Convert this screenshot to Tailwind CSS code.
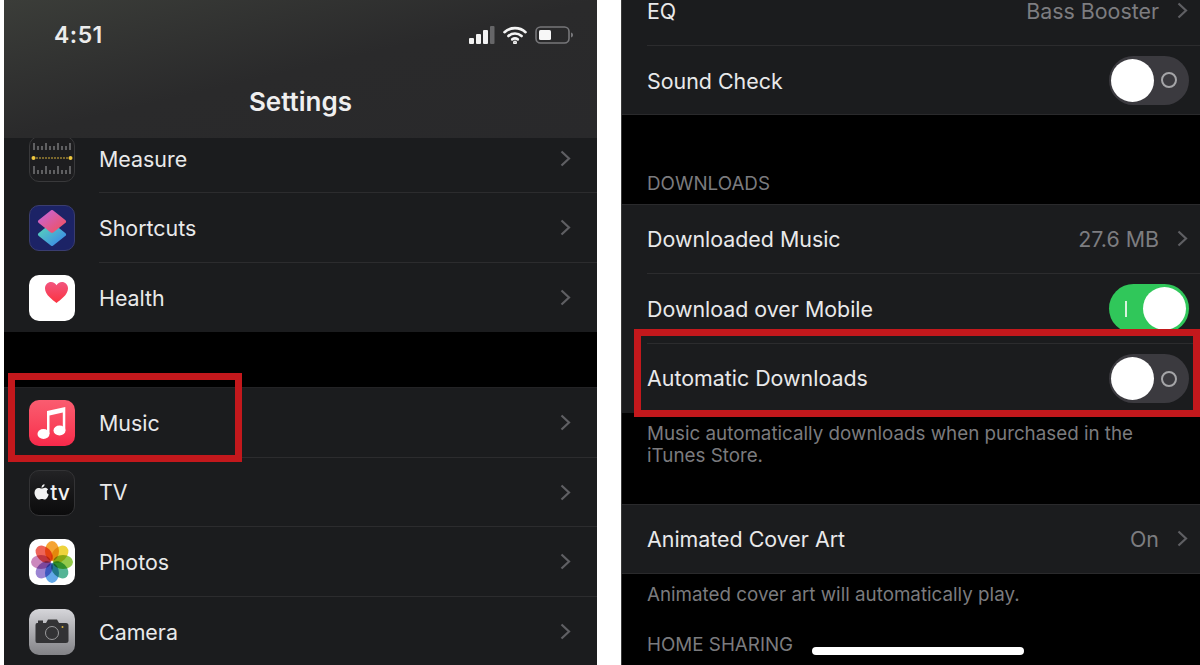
<!DOCTYPE html>
<html lang="en">
  <head>
    <meta charset="UTF-8" />
    <meta name="viewport" content="width=device-width, initial-scale=1.0" />
    <title>Settings - Music</title>
    <script src="https://cdn.jsdelivr.net/npm/@tailwindcss/browser@4"></script>
  </head>
  <body class="bg-white font-['Inter','Liberation_Sans',sans-serif] text-[#e9e9ea] overflow-hidden">
    <div class="relative w-[1200px] h-[665px] overflow-hidden flex bg-white">
      <!-- Left phone -->
      <section class="ml-[4px] w-[593px] h-[665px] overflow-hidden bg-black flex flex-col shrink-0">
        <!-- Status bar + title -->
        <header class="relative z-10 h-[138px] shrink-0 bg-gradient-to-br from-[#3b3d39] via-[#2a2a2b] to-[#29292b] flex flex-col">
          <div class="flex items-center justify-between h-[70px] pl-[50px] pr-[23px]">
            <span class="text-[23px] font-semibold text-[#ececec] tracking-[0.5px]">4:51</span>
            <div class="flex items-center gap-[8px]">
              <svg width="26" height="18" viewBox="0 0 26 18">
                <rect x="0" y="12" width="5" height="6" rx="1" fill="#f2f2f2" />
                <rect x="7" y="8" width="5" height="10" rx="1" fill="#f2f2f2" />
                <rect x="14" y="4" width="5" height="14" rx="1" fill="#f2f2f2" />
                <rect x="21" y="0" width="4.5" height="18" rx="1" fill="#666668" />
              </svg>
              <svg width="24" height="18" viewBox="0 0 24 18" fill="none" stroke="#f4f4f4" stroke-width="2.6" stroke-linecap="round">
                <path d="M1.5 6.2C7.2 0.8 16.8 0.8 22.5 6.2" />
                <path d="M5.4 10C9.2 6.6 14.8 6.6 18.6 10" />
                <path d="M9.2 13.4C10.9 12.2 13.1 12.2 14.8 13.4" />
                <circle cx="12" cy="16.4" r="0.7" fill="#f4f4f4" />
              </svg>
              <svg width="39" height="19" viewBox="0 0 39 19">
                <rect x="1" y="1" width="33" height="16" rx="4.5" fill="none" stroke="#77777a" stroke-width="1.6" />
                <rect x="4" y="4" width="12" height="10" rx="1.5" fill="#f7f7f7" />
                <path d="M36 6.5C37.6 7 38 8 38 9C38 10 37.6 11 36 11.5Z" fill="#77777a" />
              </svg>
            </div>
          </div>
          <h1 class="text-center text-[26px] leading-[30px] font-semibold text-[#efefef] mt-[17px]">Settings</h1>
        </header>

        <!-- First group, scrolled under the header -->
        <div class="bg-[#1b1c1e] mt-[-14px] shrink-0">
          <div class="h-[69px] flex items-center pl-[25px]">
            <div class="w-[46px] h-[46px] rounded-[10px] border border-[#39393b] bg-[#1d1d1f] overflow-hidden shrink-0">
              <svg width="44" height="44" viewBox="0 0 44 44">
                <path d="M4 6V13M8 9V13M12 9V13M16 6V13M20 9V13M24 9V13M28 6V13M32 9V13M36 9V13M40 6V13" stroke="#a2a2a4" stroke-width="1" />
                <path d="M4 29V37M8 33V37M12 33V37M16 29V37M20 33V37M24 33V37M28 29V37M32 33V37M36 33V37M40 29V37" stroke="#a2a2a4" stroke-width="1" />
                <path d="M3 21H41" stroke="#d8b13c" stroke-width="1.2" stroke-dasharray="2 1" />
                <circle cx="3.5" cy="21" r="2" fill="#f0c83f" />
                <circle cx="40.5" cy="21" r="2" fill="#f0c83f" />
              </svg>
            </div>
            <div class="ml-[24px] flex-1 flex items-center justify-between h-full border-b border-[#2c2c2e] pr-[26px]">
              <span class="mt-[2px] text-[21.4px]">Measure</span>
              <svg width="11" height="17" viewBox="0 0 11 17" fill="none" stroke="#5f5f63" stroke-width="2.2"><path d="M1.5 1.5L9 8.5L1.5 15.5" /></svg>
            </div>
          </div>
          <div class="h-[70px] flex items-center pl-[25px]">
            <div class="w-[46px] h-[46px] rounded-[10px] bg-[#1c2366] border border-[#3a3d70] shrink-0 flex items-center justify-center">
              <svg width="30" height="36" viewBox="0 0 30 36" stroke-linejoin="round" stroke-width="4">
                <defs>
                  <linearGradient id="shortcutBottom" x1="0" y1="0" x2="1" y2="1"><stop offset="0" stop-color="#58d6b8" /><stop offset="1" stop-color="#3a86ea" /></linearGradient>
                  <linearGradient id="shortcutTop" x1="0" y1="0" x2="1" y2="1"><stop offset="0" stop-color="#c565d8" /><stop offset="1" stop-color="#f2505c" /></linearGradient>
                </defs>
                <path d="M15 15L27 24.500L15 34L3 24.500Z" fill="url(#shortcutBottom)" stroke="url(#shortcutBottom)" />
                <path d="M15 2L27 11.500L15 21L3 11.500Z" fill="url(#shortcutTop)" stroke="url(#shortcutTop)" />
              </svg>
            </div>
            <div class="ml-[24px] flex-1 flex items-center justify-between h-full border-b border-[#2c2c2e] pr-[26px]">
              <span class="mt-[2px] text-[21.4px]">Shortcuts</span>
              <svg width="11" height="17" viewBox="0 0 11 17" fill="none" stroke="#5f5f63" stroke-width="2.2"><path d="M1.5 1.5L9 8.5L1.5 15.5" /></svg>
            </div>
          </div>
          <div class="h-[69px] flex items-center pl-[25px]">
            <div class="w-[46px] h-[46px] rounded-[10px] bg-white shrink-0 flex justify-end">
              <svg class="mt-[7px] mr-[7px]" width="23" height="21" viewBox="0 0 23 21">
                <defs><linearGradient id="heart" x1="0" y1="0" x2="0" y2="1"><stop offset="0" stop-color="#f2557f" /><stop offset="1" stop-color="#fb3340" /></linearGradient></defs>
                <path d="M11.500 21C8 18 0 13 0 6.500C0 2.500 3 0 6 0C8.500 0 10.500 1.300 11.500 3.200C12.500 1.300 14.500 0 17 0C20 0 23 2.500 23 6.500C23 13 15 18 11.500 21Z" fill="url(#heart)" />
              </svg>
            </div>
            <div class="ml-[24px] flex-1 flex items-center justify-between h-full pr-[26px]">
              <span class="mt-[2px] text-[21.4px]">Health</span>
              <svg width="11" height="17" viewBox="0 0 11 17" fill="none" stroke="#5f5f63" stroke-width="2.2"><path d="M1.5 1.5L9 8.5L1.5 15.5" /></svg>
            </div>
          </div>
        </div>

        <!-- Second group -->
        <div class="mt-[55px] bg-[#1b1c1e] border-t border-[#232325] flex-1">
          <div class="h-[70px] flex items-center pl-[25px]">
            <div class="w-[46px] h-[46px] rounded-[10px] bg-gradient-to-b from-[#fa5c70] to-[#f8284a] shrink-0 flex items-center justify-center">
              <svg width="30" height="34" viewBox="0 0 30 34" fill="#fff">
                <ellipse cx="6.500" cy="28" rx="6" ry="5" />
                <ellipse cx="22.500" cy="24.500" rx="6" ry="5" />
                <path d="M10 28H12.500V9.500L25.800 6.500V24.500H28.300V1L10 5Z" />
              </svg>
            </div>
            <div class="ml-[24px] flex-1 flex items-center justify-between h-full border-b border-[#2c2c2e] pr-[26px]">
              <span class="mt-[2px] text-[21.4px]">Music</span>
              <svg width="11" height="17" viewBox="0 0 11 17" fill="none" stroke="#5f5f63" stroke-width="2.2"><path d="M1.500 1.500L9 8.500L1.500 15.500" /></svg>
            </div>
          </div>
          <div class="h-[69px] flex items-center pl-[25px]">
            <div class="w-[46px] h-[46px] rounded-[10px] bg-gradient-to-b from-[#232325] to-[#0b0b0c] border border-[#333335] shrink-0 flex items-center justify-center gap-[1px]">
              <svg width="15" height="18" viewBox="0 0 15 18" fill="#f2f2f2">
                <path d="M7.600 4.600C8.600 4.600 9.700 3.800 11 3.800C12.200 3.800 13.400 4.400 14.100 5.500C12.200 6.600 12.500 9.500 14.700 10.500C14.100 12.400 12.500 15.600 10.800 15.600C9.800 15.600 9.200 14.900 7.900 14.900C6.600 14.900 6 15.600 5 15.600C3 15.600 0.500 11.800 0.500 8.800C0.500 5.600 2.600 3.900 4.500 3.900C5.800 3.900 6.700 4.600 7.600 4.600Z" />
                <path d="M7.500 3.700C7.400 2 8.800 0.400 10.600 0.300C10.700 2.100 9.200 3.800 7.500 3.700Z" />
              </svg>
              <span class="text-[21px] leading-[22px] font-medium text-[#f2f2f2]">tv</span>
            </div>
            <div class="ml-[24px] flex-1 flex items-center justify-between h-full border-b border-[#2c2c2e] pr-[26px]">
              <span class="text-[21.4px]">TV</span>
              <svg width="11" height="17" viewBox="0 0 11 17" fill="none" stroke="#5f5f63" stroke-width="2.2"><path d="M1.500 1.500L9 8.500L1.500 15.500" /></svg>
            </div>
          </div>
          <div class="h-[70px] flex items-center pl-[25px]">
            <div class="w-[46px] h-[46px] rounded-[10px] bg-white shrink-0 flex items-center justify-center">
              <svg class="isolate" width="44" height="44" viewBox="-22 -22 44 44">
                <ellipse class="mix-blend-multiply" cx="0" cy="-11" rx="7" ry="10" fill="#f5a433" />
                <ellipse class="mix-blend-multiply" cx="0" cy="-11" rx="7" ry="10" fill="#eed33c" transform="rotate(45)" />
                <ellipse class="mix-blend-multiply" cx="0" cy="-11" rx="7" ry="10" fill="#93c94a" transform="rotate(90)" />
                <ellipse class="mix-blend-multiply" cx="0" cy="-11" rx="7" ry="10" fill="#55b596" transform="rotate(135)" />
                <ellipse class="mix-blend-multiply" cx="0" cy="-11" rx="7" ry="10" fill="#62a8e8" transform="rotate(180)" />
                <ellipse class="mix-blend-multiply" cx="0" cy="-11" rx="7" ry="10" fill="#9b85d2" transform="rotate(225)" />
                <ellipse class="mix-blend-multiply" cx="0" cy="-11" rx="7" ry="10" fill="#cc88bd" transform="rotate(270)" />
                <ellipse class="mix-blend-multiply" cx="0" cy="-11" rx="7" ry="10" fill="#ee6458" transform="rotate(315)" />
              </svg>
            </div>
            <div class="ml-[24px] flex-1 flex items-center justify-between h-full border-b border-[#2c2c2e] pr-[26px]">
              <span class="mt-[2px] text-[21.4px]">Photos</span>
              <svg width="11" height="17" viewBox="0 0 11 17" fill="none" stroke="#5f5f63" stroke-width="2.2"><path d="M1.500 1.500L9 8.500L1.500 15.500" /></svg>
            </div>
          </div>
          <div class="h-[69px] flex items-center pl-[25px]">
            <div class="w-[46px] h-[46px] rounded-[10px] bg-gradient-to-b from-[#d6d6da] to-[#828286] shrink-0 flex items-center justify-center">
              <svg width="34" height="28" viewBox="0 0 34 28">
                <path d="M2 5H11L13 1.500H22L24 5H31Q33.500 5 33.500 7.500V23Q33.500 25 31 25H2Q0.500 25 0.500 23V7Q0.500 5 2 5Z" fill="#333335" />
                <rect x="3" y="2.500" width="5" height="2.500" fill="#333335" />
                <circle cx="17" cy="15" r="6.500" fill="none" stroke="#9a9a9c" stroke-width="1" />
                <circle cx="27.500" cy="9" r="1" fill="#d9b13c" />
              </svg>
            </div>
            <div class="ml-[24px] flex-1 flex items-center justify-between h-full pr-[26px]">
              <span class="mt-[2px] text-[21.4px]">Camera</span>
              <svg width="11" height="17" viewBox="0 0 11 17" fill="none" stroke="#5f5f63" stroke-width="2.2"><path d="M1.500 1.500L9 8.500L1.500 15.500" /></svg>
            </div>
          </div>
        </div>
      </section>

      <!-- Right phone -->
      <section class="ml-[24px] w-[579px] h-[665px] overflow-hidden bg-black flex flex-col shrink-0 border-l border-[#3a3a3a]">
        <!-- Audio group, scrolled under the top edge -->
        <div class="bg-[#1b1c1e] border-b border-[#2a2a2c] mt-[-23px] shrink-0">
          <div class="h-[69px] pl-[25px] flex items-center justify-between">
            <div class="flex-1 h-full flex items-center justify-between border-b border-[#2c2c2e] pr-[12px]">
              <span class="text-[21.4px]">EQ</span>
              <div class="flex items-center gap-[18px]">
                <span class="text-[21.4px] text-[#7d7d80]">Bass Booster</span>
                <svg width="11" height="17" viewBox="0 0 11 17" fill="none" stroke="#5f5f63" stroke-width="2.2"><path d="M1.500 1.500L9 8.500L1.500 15.500" /></svg>
              </div>
            </div>
          </div>
          <div class="h-[68px] pl-[25px] pr-[11px] flex items-center justify-between">
            <span class="mt-[2px] text-[21.4px]">Sound Check</span>
            <div class="w-[80px] h-[49px] rounded-full bg-[#3b3a3f] flex items-center pl-[2px]">
              <div class="w-[43px] h-[43px] rounded-full bg-white"></div>
              <div class="ml-[7px] w-[16px] h-[16px] rounded-full border-2 border-[#a5a5a8]"></div>
            </div>
          </div>
        </div>

        <h2 class="h-[89px] shrink-0 pl-[25px] pt-[57px] text-[18.8px] leading-[24px] text-[#7b7b7e]">DOWNLOADS</h2>

        <!-- Downloads group -->
        <div class="bg-[#1b1c1e] border-t border-[#2a2a2c] shrink-0">
          <div class="h-[69px] pl-[25px] flex">
            <div class="flex-1 flex items-center justify-between border-b border-[#2c2c2e] pr-[12px]">
              <span class="text-[21.4px]">Downloaded Music</span>
              <div class="flex items-center gap-[18px]">
                <span class="text-[21.4px] text-[#7d7d80]">27.6 MB</span>
                <svg width="11" height="17" viewBox="0 0 11 17" fill="none" stroke="#5f5f63" stroke-width="2.2"><path d="M1.500 1.500L9 8.500L1.500 15.500" /></svg>
              </div>
            </div>
          </div>
          <div class="h-[70px] pl-[25px] flex">
            <div class="flex-1 flex items-center justify-between border-b border-[#2c2c2e] pr-[11px]">
              <span class="mt-[2px] text-[21.4px]">Download over Mobile</span>
              <div class="w-[80px] h-[49px] rounded-full bg-[#30c75a] flex items-center justify-end pr-[3px]">
                <div class="w-[2px] h-[16px] bg-[#d8f3de] mr-[16px]"></div>
                <div class="w-[43px] h-[43px] rounded-full bg-white"></div>
              </div>
            </div>
          </div>
          <div class="h-[69px] pl-[25px] pr-[11px] flex items-center justify-between">
            <span class="text-[21.4px]">Automatic Downloads</span>
            <div class="w-[80px] h-[49px] rounded-full bg-[#3b3a3f] flex items-center pl-[2px]">
              <div class="w-[43px] h-[43px] rounded-full bg-white"></div>
              <div class="ml-[7px] w-[16px] h-[16px] rounded-full border-2 border-[#a5a5a8]"></div>
            </div>
          </div>
        </div>

        <p class="h-[91px] shrink-0 pl-[25px] pt-[10px] text-[18.8px] leading-[22px] text-[#7b7b7e]">Music automatically downloads when purchased in the<br />iTunes Store.</p>

        <!-- Cover art group -->
        <div class="bg-[#1b1c1e] border-y border-[#2a2a2c] h-[70px] pl-[25px] pr-[12px] flex items-center justify-between shrink-0">
          <span class="text-[21.4px]">Animated Cover Art</span>
          <div class="flex items-center gap-[18px]">
            <span class="text-[21.4px] text-[#7d7d80]">On</span>
            <svg width="11" height="17" viewBox="0 0 11 17" fill="none" stroke="#5f5f63" stroke-width="2.2"><path d="M1.500 1.500L9 8.500L1.500 15.500" /></svg>
          </div>
        </div>

        <p class="pl-[25px] pt-[10px] text-[18.8px] leading-[22px] text-[#7b7b7e]">Animated cover art will automatically play.</p>
        <h2 class="pl-[25px] pt-[28px] text-[18.8px] leading-[22px] text-[#7b7b7e]">HOME SHARING</h2>
      </section>

      <!-- Overlays: annotation boxes and home indicator -->
      <div class="absolute left-[8px] top-[373px] w-[234px] h-[89px] border-[7.500px] border-[#c3181c]"></div>
      <div class="absolute left-[634px] top-[329px] w-[566px] h-[88px] border-[7.500px] border-[#c3181c]"></div>
      <div class="absolute left-[812px] top-[647px] w-[212px] h-[8px] rounded-full bg-white"></div>
    </div>
  </body>
</html>
